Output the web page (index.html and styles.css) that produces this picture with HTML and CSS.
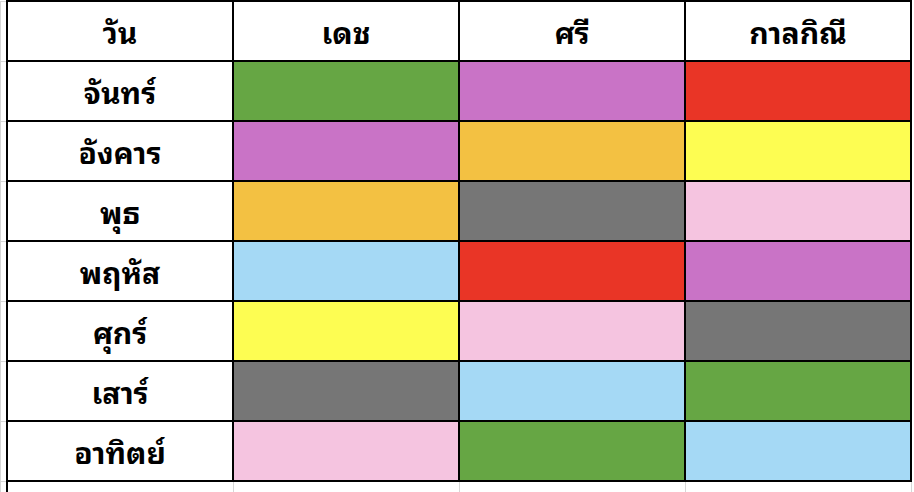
FILE: index.html
```html
<!DOCTYPE html>
<html lang="th">
<head>
<meta charset="utf-8">
<title>สีประจำวัน</title>
<link rel="stylesheet" href="styles.css">
</head>
<body>
<table class="sheet">
  <tr class="row">
    <td class="gut"></td>
    <th class="cell head">วัน</th>
    <th class="cell head">เดช</th>
    <th class="cell head">ศรี</th>
    <th class="cell head">กาลกิณี</th>
  </tr>
  <tr class="row">
    <td class="gut"></td>
    <th class="cell day">จันทร์</th>
    <td class="cell green"></td>
    <td class="cell purple"></td>
    <td class="cell red"></td>
  </tr>
  <tr class="row">
    <td class="gut"></td>
    <th class="cell day">อังคาร</th>
    <td class="cell purple"></td>
    <td class="cell orange"></td>
    <td class="cell yellow"></td>
  </tr>
  <tr class="row">
    <td class="gut"></td>
    <th class="cell day">พุธ</th>
    <td class="cell orange"></td>
    <td class="cell gray"></td>
    <td class="cell pink"></td>
  </tr>
  <tr class="row">
    <td class="gut"></td>
    <th class="cell day">พฤหัส</th>
    <td class="cell blue"></td>
    <td class="cell red"></td>
    <td class="cell purple"></td>
  </tr>
  <tr class="row">
    <td class="gut"></td>
    <th class="cell day">ศุกร์</th>
    <td class="cell yellow"></td>
    <td class="cell pink"></td>
    <td class="cell gray"></td>
  </tr>
  <tr class="row">
    <td class="gut"></td>
    <th class="cell day">เสาร์</th>
    <td class="cell gray"></td>
    <td class="cell blue"></td>
    <td class="cell green"></td>
  </tr>
  <tr class="row">
    <td class="gut"></td>
    <th class="cell day">อาทิตย์</th>
    <td class="cell pink"></td>
    <td class="cell green"></td>
    <td class="cell blue"></td>
  </tr>
  <tr class="tail">
    <td class="gut"></td>
    <td class="blank"></td>
    <td class="blank"></td>
    <td class="blank"></td>
    <td class="blank"></td>
  </tr>
</table>
</body>
</html>
```
FILE: styles.css
```css
html, body {
  margin: 0;
  padding: 0;
  background: #ffffff;
}

.sheet {
  border-collapse: collapse;
  table-layout: fixed;
  font-family: "Noto Sans Thai Looped", "Leelawadee UI", Tahoma, "Noto Sans Thai", "Noto Sans", sans-serif;
}

.row {
  height: 60px;
}

.tail {
  height: 20px;
}

.gut {
  width: 5px;
  padding: 0;
  border: 1px solid #d6d6d6;
  border-right: 2px solid #000;
}

.cell {
  width: 224px;
  padding: 0;
  border: 2px solid #000;
  text-align: center;
  vertical-align: middle;
  font-size: 30px;
  font-weight: 700;
  line-height: 1;
  color: #000;
  background: #ffffff;
}

.blank {
  padding: 0;
  border: 1px solid #d6d6d6;
  border-top: 2px solid #000;
}

.green { background: #66a644; }
.purple { background: #c973c6; }
.red { background: #e93526; }
.orange { background: #f3c142; }
.yellow { background: #fdfd52; }
.gray { background: #767676; }
.pink { background: #f5c4e0; }
.blue { background: #a5d9f5; }
```
